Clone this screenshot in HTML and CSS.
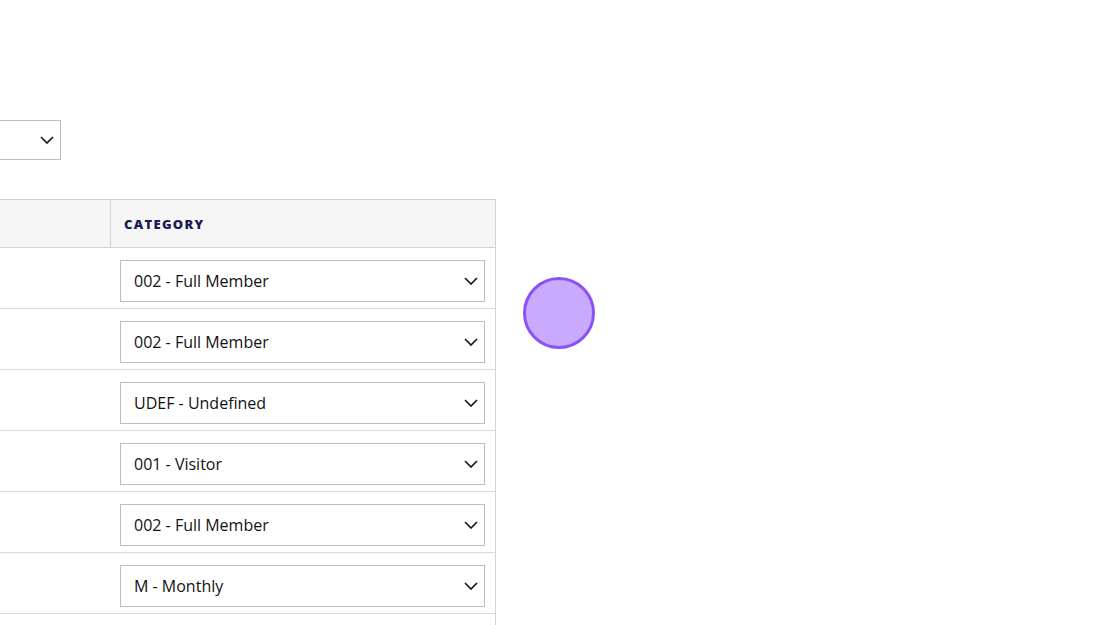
FILE: index.html
```html
<!DOCTYPE html>
<html>
<head>
<meta charset="utf-8">
<link rel="stylesheet" href="styles.css">
</head>
<body>
<div class="page">
  <div class="top-select">
    <svg class="chev" width="14" height="8" viewBox="0 0 14 8"><path d="M1 1 L7 7 L13 1" fill="none" stroke="#111" stroke-width="1.6"/></svg>
  </div>
  <div class="content">
    <div class="table">
      <div class="row head">
        <div class="cell first"></div>
        <div class="cell cat"><span class="th">CATEGORY</span></div>
      </div>
      <div class="row">
        <div class="cell first"></div>
        <div class="cell cat"><div class="select"><span>002 - Full Member</span><svg class="chev" width="14" height="8" viewBox="0 0 14 8"><path d="M1 1 L7 7 L13 1" fill="none" stroke="#111" stroke-width="1.6"/></svg></div></div>
      </div>
      <div class="row">
        <div class="cell first"></div>
        <div class="cell cat"><div class="select"><span>002 - Full Member</span><svg class="chev" width="14" height="8" viewBox="0 0 14 8"><path d="M1 1 L7 7 L13 1" fill="none" stroke="#111" stroke-width="1.6"/></svg></div></div>
      </div>
      <div class="row">
        <div class="cell first"></div>
        <div class="cell cat"><div class="select"><span>UDEF - Undefined</span><svg class="chev" width="14" height="8" viewBox="0 0 14 8"><path d="M1 1 L7 7 L13 1" fill="none" stroke="#111" stroke-width="1.6"/></svg></div></div>
      </div>
      <div class="row">
        <div class="cell first"></div>
        <div class="cell cat"><div class="select"><span>001 - Visitor</span><svg class="chev" width="14" height="8" viewBox="0 0 14 8"><path d="M1 1 L7 7 L13 1" fill="none" stroke="#111" stroke-width="1.6"/></svg></div></div>
      </div>
      <div class="row">
        <div class="cell first"></div>
        <div class="cell cat"><div class="select"><span>002 - Full Member</span><svg class="chev" width="14" height="8" viewBox="0 0 14 8"><path d="M1 1 L7 7 L13 1" fill="none" stroke="#111" stroke-width="1.6"/></svg></div></div>
      </div>
      <div class="row">
        <div class="cell first"></div>
        <div class="cell cat"><div class="select"><span>M - Monthly</span><svg class="chev" width="14" height="8" viewBox="0 0 14 8"><path d="M1 1 L7 7 L13 1" fill="none" stroke="#111" stroke-width="1.6"/></svg></div></div>
      </div>
      <div class="row">
        <div class="cell first"></div>
        <div class="cell cat"></div>
      </div>
    </div>
    <div class="side">
      <div class="dot"></div>
    </div>
  </div>
</div>
</body>
</html>
```

FILE: styles.css
```css
html, body {
  margin: 0;
  padding: 0;
  background: #fff;
  overflow: hidden;
}
body {
  font-family: "Open Sans", "Liberation Sans", sans-serif;
  color: #111;
  width: 1120px;
  height: 625px;
}
.page {
  padding-top: 120px;
}
.top-select {
  height: 38px;
  border: 1px solid #bdbdbd;
  border-left: none;
  display: flex;
  align-items: center;
  justify-content: flex-end;
  padding-right: 6px;
  box-sizing: content-box;
  width: 54px;
}
.content {
  margin-top: 39px;
  display: flex;
  align-items: flex-start;
}
.table {
  width: 495px;
  border-top: 1px solid #d3d3d3;
  border-right: 1px solid #d3d3d3;
}
.row {
  display: flex;
  height: 60px;
  border-bottom: 1px solid #d9d9d9;
}
.row.head {
  height: 47px;
  background: #f5f5f5;
  border-bottom: 1px solid #d3d3d3;
}
.cell.first {
  width: 110px;
  border-right: 1px solid #d3d3d3;
}
.row:not(.head) .cell.first {
  border-right: none;
  width: 111px;
}
.cell.cat {
  flex: 1;
  padding: 12px 10px 0 9px;
}
.row.head .cell.cat {
  padding: 0 0 0 13px;
  display: flex;
  align-items: center;
}
.th {
  font-weight: 800;
  font-size: 13px;
  letter-spacing: 1.3px;
  color: #1b1a55;
}
.select {
  height: 40px;
  border: 1px solid #bdbdbd;
  display: flex;
  align-items: center;
  justify-content: space-between;
  padding: 0 6px 0 13px;
  font-size: 16px;
  color: #111;
}
.chev {
  display: block;
}
.side {
  padding: 78px 0 0 27px;
}
.dot {
  width: 66px;
  height: 66px;
  border-radius: 50%;
  background: #c8aafe;
  border: 3px solid #8c52f6;
}
```
